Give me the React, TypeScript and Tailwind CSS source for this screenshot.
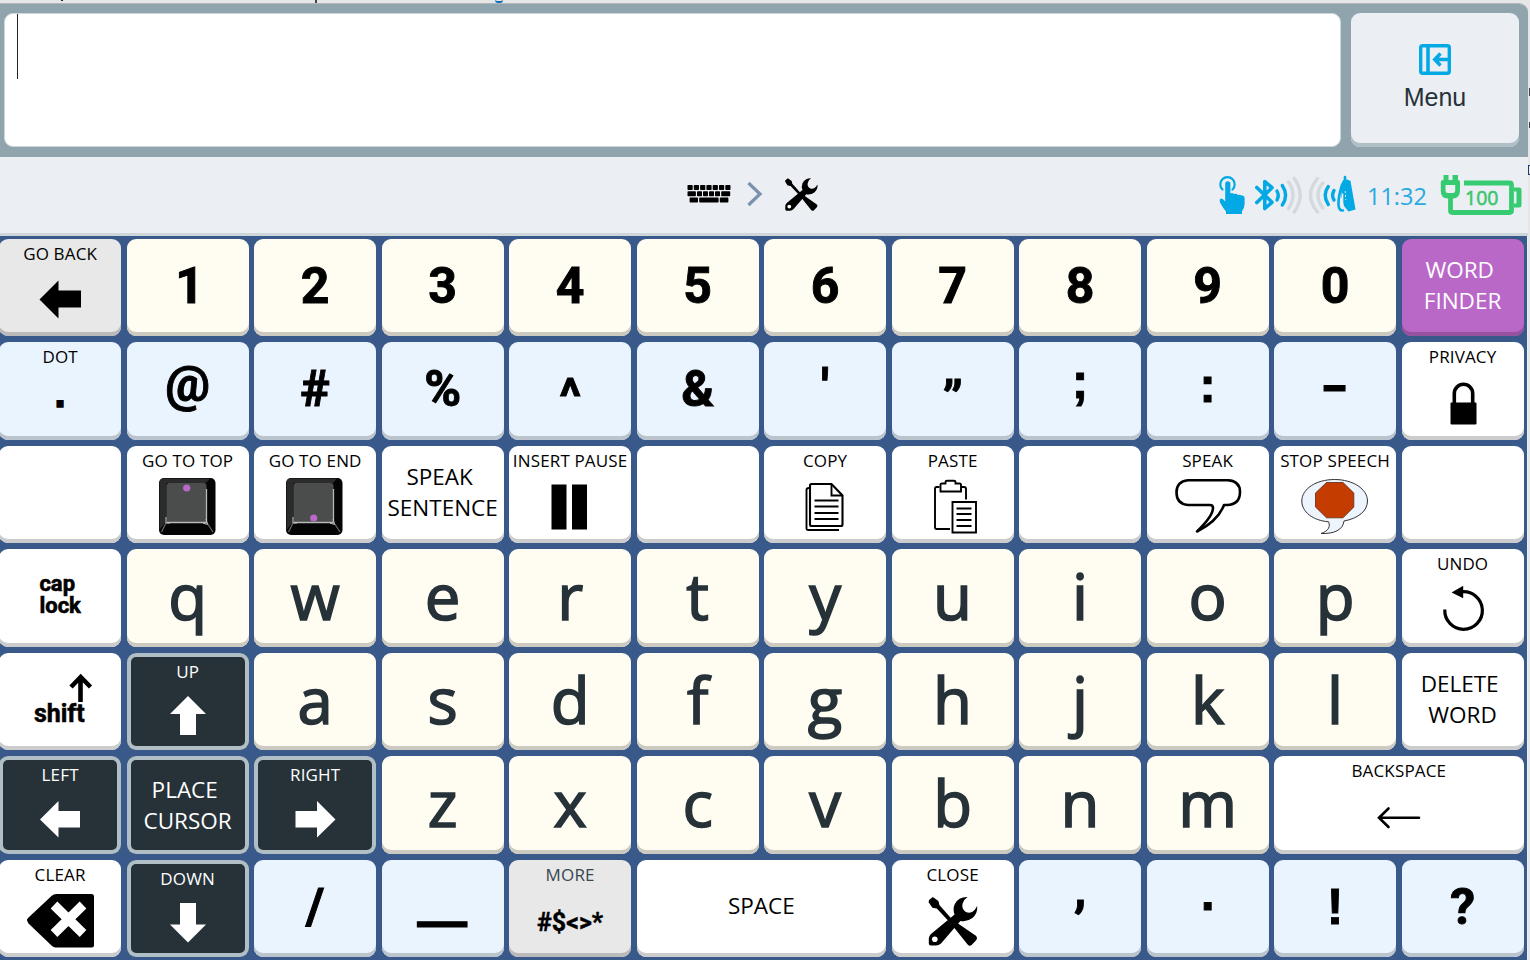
import React from 'react';
import clsx from 'clsx';

type Tone = 'white' | 'cream' | 'sky' | 'gray' | 'dark' | 'purple';

interface KeyDef {
  id: string;
  tone: Tone;
  label?: string;
  icon?: React.ReactNode;
  text?: string;
  letter?: string;
  symbol?: string;
  nudge?: string;
  square?: boolean;
  wide?: boolean;
}

const tones: Record<Tone, string> = {
  white: 'bg-white text-black shadow-[inset_0_-4px_0_#cccccc]',
  cream: 'bg-[#fffdf2] text-black shadow-[inset_0_-4px_0_#ccc9c0]',
  sky: 'bg-[#eaf4ff] text-black shadow-[inset_0_-4px_0_#bbc4cd]',
  gray: 'bg-[#e8e8e8] text-black shadow-[inset_0_-4px_0_#bababa]',
  dark: 'bg-[#263238] text-white shadow-[inset_0_0_0_4px_#b0bec5] pt-1',
  purple: 'bg-[#ba68c8] text-white shadow-[inset_0_-4px_0_#9553a0]',
};

// Icon area under a key label
const Art: React.FC<{ w?: number; children: React.ReactNode }> = ({ w = 122, children }) => (
  <svg width={w} height={64} viewBox={`0 0 ${w} 64`} className="block shrink-0" fill="none">
    {children}
  </svg>
);

const ToolsShape = () => (
  <g>
    <path
      fill="#000"
      d="M.6 3.4L4.4 .4L10 4.4L11 8.6L23.8 23L47.8 39.6Q49.4 41.6 48 43.6L43.2 48.6Q41 50 39.2 48L22.2 26.8L8.4 12L4 11.2L.2 5.8Z"
    />
    <path
      fill="#000"
      d="M39.2 .4Q30 .2 26.4 7.5Q24 13 26.2 18L2.6 37.4Q.4 39.4 .4 42V47Q.4 49 2.4 49H7.6Q10.4 49 12.6 47L32 24.4Q38.5 25.8 44 21.6Q49.4 17 48.8 9.6L46.4 13.2Q42.6 17.8 37.4 15.4Q32.8 12.6 34.2 7Q35.6 2.6 39.2 .4Z"
    />
    <circle cx="6.4" cy="42.8" r="2.8" fill="#fff" />
  </g>
);

const KeyCap = ({ dotY }: { dotY: number }) => (
  <Art>
    <rect x="32" y="3" width="56.5" height="57" rx="5" fill="#050505" />
    <path d="M32.5 55V8Q32.5 3.5 37 3.5H83L79 8H39.5V46Z" fill="#2b2b2b" />
    <rect x="39.5" y="8" width="40" height="40" rx="3" fill="#4b4d4c" />
    <path d="M79.5 14V47.5H40" stroke="#b9b9b9" strokeWidth="1.3" />
    <path d="M39.5 47L34.5 57M79.5 47L86 57" stroke="#6c6c6c" strokeWidth="1.2" />
    <path d="M39 42V48H43M79 44L80.5 49.5L76 48" stroke="#c4c4c4" strokeWidth="1" />
    <circle cx="59.7" cy={dotY} r="3.6" fill="#ba68c8" />
  </Art>
);

const icons = {
  back: <Art><path fill="#000" d="M40.5 31.5L59.5 12.5V22.5H82V39.5H59.5V50.5Z" /></Art>,
  left: <Art><path fill="#fff" d="M41 30.5L59.5 12V22H81V38.5H59.5V48.5Z" /></Art>,
  right: <Art><path fill="#fff" d="M81.5 30.5L63 12V22H41.5V38.5H63V48.5Z" /></Art>,
  up: <Art><path fill="#fff" d="M61 10L79 28H69V49H53V28H43Z" /></Art>,
  down: <Art><path fill="#fff" d="M61 49.5L79 31.5H69V10H53V31.5H43Z" /></Art>,
  lock: (
    <Art>
      <rect x="48.5" y="31.5" width="26" height="22" rx="1" fill="#000" />
      <path d="M52.3 33V22.5a9.2 9.2 0 0 1 18.4 0V33" stroke="#000" strokeWidth="3.6" />
    </Art>
  ),
  top: <KeyCap dotY={13} />,
  end: <KeyCap dotY={43} />,
  pause: (
    <Art>
      <path fill="#000" d="M42.5 9.5H57.5V54.5H42.5ZM63 9.5H78V54.5H63Z" />
    </Art>
  ),
  copy: (
    <Art>
      <path d="M46 10.5Q46 9 47.5 9H67.5L78.5 20.5V49.5Q78.5 51 77 51H47.5Q46 51 46 49.5Z" stroke="#000" strokeWidth="2.1" />
      <path d="M67.5 9V20.5H78M45 13Q42.5 13 42.5 15V53.5Q42.5 55 44 55H75" stroke="#000" strokeWidth="1.9" />
      <path d="M50.5 25.5H74.5M50.5 31.5H74.5M50.5 38H74.5M50.5 44H74.5" stroke="#000" strokeWidth="2.1" />
    </Art>
  ),
  paste: (
    <Art>
      <path d="M47.5 12H44.5Q43 12 43 14V52Q43 54 44.5 54H58M69.5 12H72Q74 12 74 14V24.5" stroke="#000" strokeWidth="1.9" />
      <path d="M48.5 16.5V9.5Q48.5 8.5 50 8.5H53.5V7Q53.5 5.8 55 5.8H62Q63.5 5.8 63.5 7V8.5H67.5Q69 8.5 69 9.5V16.5Z" stroke="#000" strokeWidth="1.9" />
      <path d="M60.5 27H84V57.5H60.5Z" stroke="#000" strokeWidth="1.9" />
      <path d="M64.5 33.5H79.5M64.5 39H79.5M64.5 45H79.5M64.5 51H79.5" stroke="#000" strokeWidth="1.9" />
    </Art>
  ),
  speak: (
    <Art>
      <path
        d="M41 5.3H81Q93 6 93 17Q93 29.5 80 30H77Q71 46 50 56.5Q66 41 66 33Q66 30 63 30H41Q29.5 29 29.5 17.5Q29.5 6.5 41 5.3Z"
        stroke="#000" strokeWidth="2.6" strokeLinejoin="round"
      />
    </Art>
  ),
  stop: (
    <Art>
      <path
        d="M60.6 4.5C79 4.5 93.5 14 93.5 26C93.5 36 84 43.5 70 46C69 55 60 59 47 58.5C55 56 56.5 51 54.5 46.8C39 45.5 27.8 37 27.8 26C27.8 14 42 4.5 60.6 4.5Z"
        fill="#edf4fd" stroke="#333" strokeWidth="1"
      />
      <path d="M52.5 7.5H69L79.8 18V32L69 42.8H52.5L41.5 32V18Z" fill="#c43c00" stroke="#5b2a14" strokeWidth=".8" />
    </Art>
  ),
  undo: (
    <Art>
      <path d="M42.8 31.5A18.8 18.8 0 1 0 59.6 13.8" stroke="#000" strokeWidth="3.2" />
      <path d="M49.6 14.4L61.2 7.7V20.2Z" fill="#000" />
    </Art>
  ),
  clear: (
    <Art>
      <path d="M28 31.5Q27.5 30.5 29 29L52.5 7Q54.5 5 57.5 5H92.5Q95 5 95 7.5V56Q95 58.5 92.5 58.5H56.5Q54.5 58.5 52.5 56.5L29.5 34.5Z" fill="#000" />
      <path d="M55 16L84 44.5M84 16L55 44.5" stroke="#fff" strokeWidth="9.5" />
    </Art>
  ),
  close: (
    <Art>
      <g transform="translate(36.4 7.5)"><ToolsShape /></g>
    </Art>
  ),
  backspace: (
    <Art w={250}>
      <path d="M105 32.7H145M114.5 23.5L105 32.7L114.5 42" stroke="#000" strokeWidth="2.6" strokeLinecap="round" />
    </Art>
  ),
  shift: (
    <svg width="122" height="93" viewBox="0 0 122 93" fill="none">
      <path d="M81.5 49V24M72 34L81.7 24L91.5 34" stroke="#000" strokeWidth="4.6" />
      <text x="34.9" y="69" fontFamily="Roboto" fontWeight="700" fontSize="25" fill="#000" stroke="#000" strokeWidth=".5">
        shift
      </text>
    </svg>
  ),
};

const letterKeys = (s: string): KeyDef[] => s.split('').map((c) => ({ id: c, tone: 'cream', letter: c }));
const blank = (id: string): KeyDef => ({ id, tone: 'white' });

const keys: KeyDef[] = [
  { id: 'back', tone: 'gray', label: 'GO BACK', icon: icons.back },
  { id: '1', tone: 'cream', symbol: '1', nudge: 'pl-1' },
  ...'234567890'.split('').map((c): KeyDef => ({ id: c, tone: 'cream', symbol: c })),
  { id: 'finder', tone: 'purple', text: 'WORD \nFINDER' },

  {
    id: 'dot', tone: 'sky', label: 'DOT',
    icon: (
      <span className="font-['Liberation_Sans'] text-[40px] font-bold leading-[45px] [-webkit-text-stroke:1.6px_#000]">.</span>
    ),
  },
  { id: 'at', tone: 'sky', symbol: '@', nudge: 'pb-2.5' },
  { id: 'hash', tone: 'sky', symbol: '#' },
  { id: 'pct', tone: 'sky', symbol: '%' },
  { id: 'caret', tone: 'sky', symbol: '^', nudge: 'pt-4' },
  { id: 'amp', tone: 'sky', symbol: '&' },
  { id: 'apos', tone: 'sky', symbol: "'", nudge: 'pb-1' },
  { id: 'quote', tone: 'sky', symbol: '”', nudge: 'pt-5' },
  { id: 'semi', tone: 'sky', symbol: ';', nudge: 'pb-4', square: true },
  { id: 'colon', tone: 'sky', symbol: ':', nudge: 'pb-2', square: true },
  { id: 'dash', tone: 'sky', symbol: '-', nudge: 'pb-1 scale-x-[1.5]' },
  { id: 'privacy', tone: 'white', label: 'PRIVACY', icon: icons.lock },

  blank('b1'),
  { id: 'top', tone: 'white', label: 'GO TO TOP', icon: icons.top },
  { id: 'end', tone: 'white', label: 'GO TO END', icon: icons.end },
  { id: 'sentence', tone: 'white', text: 'SPEAK \nSENTENCE' },
  { id: 'pause', tone: 'white', label: 'INSERT PAUSE', icon: icons.pause },
  blank('b2'),
  { id: 'copy', tone: 'white', label: 'COPY', icon: icons.copy },
  { id: 'paste', tone: 'white', label: 'PASTE', icon: icons.paste },
  blank('b3'),
  { id: 'speak', tone: 'white', label: 'SPEAK', icon: icons.speak },
  { id: 'stop', tone: 'white', label: 'STOP SPEECH', icon: icons.stop },
  blank('b4'),

  {
    id: 'caps', tone: 'white',
    icon: (
      <span className="font-[Roboto] text-[22px] font-bold leading-[22px] h-[92px] flex flex-col justify-center text-left [-webkit-text-stroke:0.6px_#000]">
        <span>cap</span>
        <span>lock</span>
      </span>
    ),
  },
  ...letterKeys('qwertyuiop'),
  { id: 'undo', tone: 'white', label: 'UNDO', icon: icons.undo },

  { id: 'shift', tone: 'white', icon: icons.shift },
  { id: 'up', tone: 'dark', label: 'UP', icon: icons.up },
  ...letterKeys('asdfghjkl'),
  { id: 'delword', tone: 'white', text: 'DELETE \nWORD' },

  { id: 'left', tone: 'dark', label: 'LEFT', icon: icons.left },
  { id: 'place', tone: 'dark', text: 'PLACE \nCURSOR' },
  { id: 'right', tone: 'dark', label: 'RIGHT', icon: icons.right },
  ...letterKeys('zxcvbnm'),
  { id: 'backspace', tone: 'white', label: 'BACKSPACE', icon: icons.backspace, wide: true },

  { id: 'clear', tone: 'white', label: 'CLEAR', icon: icons.clear },
  { id: 'down', tone: 'dark', label: 'DOWN', icon: icons.down },
  { id: 'slash', tone: 'sky', symbol: '/' },
  { id: 'under', tone: 'sky', symbol: '_', nudge: 'pb-1 scale-x-[2.2]' },
  {
    id: 'more', tone: 'gray', label: 'MORE',
    icon: (
      <span className="font-[Roboto] text-[25px] font-bold leading-[67px] [-webkit-text-stroke:0.4px_#000]">#$&lt;&gt;*</span>
    ),
  },
  { id: 'space', tone: 'white', text: 'SPACE', wide: true },
  { id: 'close', tone: 'white', label: 'CLOSE', icon: icons.close },
  { id: 'comma', tone: 'sky', symbol: ',', nudge: 'pb-9' },
  { id: 'period', tone: 'sky', symbol: '.', nudge: 'pb-7', square: true },
  { id: 'bang', tone: 'sky', symbol: '!', square: true },
  { id: 'question', tone: 'sky', symbol: '?' },
];

const Key: React.FC<{ def: KeyDef }> = ({ def }) => (
  <button
    className={clsx(
      'rounded-[9px] overflow-hidden flex flex-col items-center min-w-0 min-h-0',
      tones[def.tone],
      def.wide && 'col-span-2',
    )}
  >
    {def.label && (
      <span
        className={clsx(
          'text-[17px] leading-[29px] tracking-[0.15px] whitespace-nowrap',
          def.id === 'more' && 'text-[#37474f]',
        )}
      >
        {def.label}
      </span>
    )}
    {def.icon}
    {def.text && (
      <span
        className={clsx(
          'text-[22.5px] leading-[31px] whitespace-pre flex items-center justify-center text-center',
          def.tone === 'dark' ? 'h-[90px]' : 'h-[92px]',
        )}
      >
        {def.text}
      </span>
    )}
    {def.letter && (
      <span className="text-[63.5px] leading-[94px] text-[#263238] [-webkit-text-stroke:1.6px_#263238]">{def.letter}</span>
    )}
    {def.symbol && (
      <span
        className={clsx(
          'text-[50px] leading-[1] font-bold h-[94px] flex items-center [-webkit-text-stroke:0.9px_#000]',
          def.square ? "font-['Liberation_Sans']" : 'font-[Roboto]',
          def.nudge,
        )}
      >
        {def.symbol}
      </span>
    )}
  </button>
);

const KeyboardIcon = () => (
  <svg width="44" height="20" viewBox="0 0 44 20" fill="#000">
    {[0, 6.3, 12.6, 18.9, 25.2, 31.5, 37.8].map((x) => (
      <rect key={x} x={x + 0.5} y="1" width="5.2" height="5" rx=".8" />
    ))}
    <rect x=".5" y="7.3" width="8.4" height="5" rx=".8" />
    {[10, 16, 22, 28].map((x) => (
      <rect key={x} x={x} y="7.3" width="5" height="5" rx=".8" />
    ))}
    <rect x="34.2" y="7.3" width="9" height="5" rx=".8" />
    <rect x="2.6" y="13.6" width="8.4" height="5" rx=".8" />
    <rect x="12.2" y="13.6" width="19.4" height="5" rx=".8" />
    <rect x="32.8" y="13.6" width="8.6" height="5" rx=".8" />
  </svg>
);

const TouchIcon = () => (
  <svg width="28" height="40" viewBox="0 0 28 40" fill="none">
    <path d="M4.5 14.5A7.2 7.2 0 1 1 14.5 14.5" stroke="#03a9e5" strokeWidth="2.2" strokeLinecap="round" />
    <path
      d="M7.2 9Q7.2 6.3 9.8 6.3Q12.4 6.3 12.4 9V18.6Q14 17.4 16 18.9Q18.3 18.2 20 20Q22 19.2 23.5 20.6Q26.6 20 26.6 23V29Q26.6 33 24 36V39H8V36.5Q5 33 2.3 28Q.8 24 3 23.4Q5 23.4 7.2 26.6Z"
      fill="#03a9e5"
    />
  </svg>
);

const BluetoothIcon = () => (
  <svg width="50" height="40" viewBox="0 0 50 40" fill="none" strokeLinecap="round" strokeLinejoin="round">
    <path d="M2.8 12.5L18 27.3L10.8 33.5V6.5L18 12.7L2.8 27.5" stroke="#03a9e5" strokeWidth="3.6" />
    <path d="M23 16Q25.4 20.5 23 25M28.3 10.5Q35 20.5 28.3 30" stroke="#03a9e5" strokeWidth="3.4" />
    <path d="M34.5 7Q43.5 20 34.5 33.5M40.3 3.5Q52 20 40.3 37" stroke="#d3d9dd" strokeWidth="3.4" />
  </svg>
);

const SwitchIcon = () => (
  <svg width="50" height="40" viewBox="0 0 50 40" fill="none" strokeLinecap="round" strokeLinejoin="round">
    <path d="M9.5 3.5Q-4.5 20 9.5 37M14.8 8Q5.2 20 14.8 33" stroke="#d3d9dd" strokeWidth="3.4" />
    <path d="M20.3 11.5Q14 20 20.3 29.5M26 15.5Q23.1 20.3 26 25" stroke="#03a9e5" strokeWidth="3.4" />
    <path d="M33 12L35 5.5L39.5 4.5L42.5 6L47.5 34.5L40.5 36.5L36 31L33.5 22Z" fill="#03a9e5" />
    <path d="M37 2V5L34 10Q30 23 30.5 30Q31 36 35 35.5" stroke="#03a9e5" strokeWidth="2.6" />
    <path d="M34.6 19V31" stroke="#ebeef2" strokeWidth="1.4" />
    <path d="M37.2 16.5L37.8 24.5" stroke="#ebeef2" strokeWidth="1" strokeDasharray="1 3" />
  </svg>
);

const BatteryIcon = () => (
  <svg width="82" height="40" viewBox="0 0 82 40" fill="none">
    <path d="M24 8H69.5Q71.5 8 71.5 10V35.5Q71.5 37.5 69.5 37.5H12.5Q10.5 37.5 10.5 35.5V22" stroke="#36cb70" strokeWidth="4.8" />
    <path d="M74 12.5H79Q81.5 12.5 81.5 15V30Q81.5 32.5 79 32.5H74V28.5H76.5V16.5H74Z" fill="#36cb70" />
    <path
      fillRule="evenodd"
      d="M3.5 0H8.5V5H12.5V0H18V5Q20 5 20 7V15Q20 23.5 13 23.5H8Q.8 23.5 .8 16V7Q.8 5 3.5 5ZM5.5 10V15.5Q5.5 18 8 18H12.5Q15.2 18 15.2 15.5V10Z"
      fill="#36cb70"
    />
    <text x="25" y="30" fontFamily="Open Sans" fontSize="19.5" fill="#3cc66e" stroke="#3cc66e" strokeWidth=".6">
      100
    </text>
  </svg>
);

export default function App() {
  return (
    <div className="w-[1530px] h-[960px] overflow-hidden bg-[#e6e6e6] pt-[3px] flex font-['Open_Sans',sans-serif] relative">
      {/* Window behind the speech app, visible at its edges */}
      <div className="absolute left-[61px] top-0 w-0.5 h-px bg-[#222]" />
      <div className="absolute left-[315px] top-0 w-0.5 h-[3px] bg-[#444]" />
      <div className="absolute left-[495px] top-0 w-2 h-[3px] rounded-b-full border-b-2 border-[#0b6fb8]" />
      <div className="absolute left-[1528px] top-[165px] w-0.5 h-2.5 border-y border-l border-[#223a66]" />
      <div className="absolute left-[1529px] top-[88px] w-px h-2 bg-[#444]" />
      <div className="absolute left-[1529px] top-[122px] w-px h-1.5 bg-[#444]" />

      <div className="w-[1528px] shrink-0 h-[957px] flex flex-col rounded-tr-[9px] overflow-hidden bg-[#ebeef2] border-t border-[#b3b7b9]">
        <header className="h-[153px] shrink-0 bg-[#90a4ae] pt-[9px] pl-1 flex gap-2.5">
          <div className="w-[1337px] h-[134px] rounded-[9px] bg-white border border-[#cdd6da] pl-3">
            <div className="w-px h-[65px] bg-[#222]" />
          </div>
          <button className="w-[168px] h-[134px] rounded-[9px] bg-[#ebeef2] shadow-[inset_0_-4px_0_#b0bec5] flex flex-col items-center pt-[31px]">
            <svg width="32" height="32" viewBox="0 0 32 32" fill="none" stroke="#03a9e5">
              <rect x="1.7" y="1.7" width="28.6" height="27.6" rx="2" strokeWidth="3.4" />
              <path d="M9 1.5V29.5" strokeWidth="3.6" />
              <path d="M30 15.5H16.5M21.5 9.5L15.8 15.5L21.5 21.5" strokeWidth="3.5" />
            </svg>
            <span className="font-['Liberation_Sans'] text-[25px] leading-[30px] mt-1.5 text-[#263238]">Menu</span>
          </button>
        </header>

        <nav className="h-[79px] shrink-0 border-b-[3px] border-[#cfd6da] grid grid-cols-[1fr_auto_1fr] items-center">
          <span />
          <div className="flex items-center pr-6 pb-0.5">
            <KeyboardIcon />
            <svg width="16" height="26" viewBox="0 0 16 26" fill="none" className="ml-4 mr-[22px]">
              <path d="M1.5 2L13 13L1.5 24" stroke="#7c91ad" strokeWidth="3.2" />
            </svg>
            <svg width="33" height="33" viewBox="0 0 49.5 49.5">
              <ToolsShape />
            </svg>
          </div>
          <div className="flex items-center justify-end pr-1.5">
            <TouchIcon />
            <div className="ml-2"><BluetoothIcon /></div>
            <div className="ml-1"><SwitchIcon /></div>
            <span className="ml-[9px] text-[23.5px] leading-8 pt-0.5 text-[#29a9e1] w-[60px] mr-[13px]">11:32</span>
            <BatteryIcon />
          </div>
        </nav>

        <main className="flex-1 bg-[#385989] pt-[2.7px] w-[1527px]">
          <div className="grid grid-cols-12 grid-rows-7 gap-x-[5.45px] gap-y-[6px] w-[1524.5px] h-[718.5px] -ml-[0.9px]">
            {keys.map((k) => (
              <Key key={k.id} def={k} />
            ))}
          </div>
        </main>
      </div>
    </div>
  );
}
